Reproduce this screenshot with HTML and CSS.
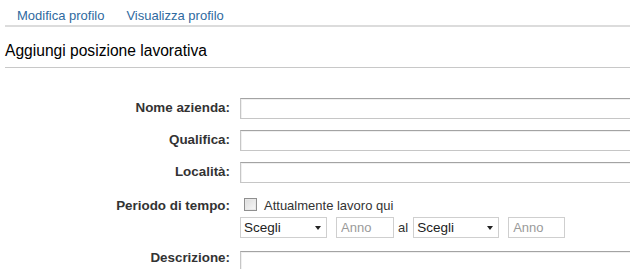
FILE: index.html
```html
<!DOCTYPE html>
<html lang="it">
<head>
<meta charset="utf-8">
<title>Aggiungi posizione lavorativa</title>
<link rel="stylesheet" href="styles.css">
</head>
<body>
<nav class="tabs">
  <a class="tab" href="#">Modifica profilo</a>
  <a class="tab" href="#">Visualizza profilo</a>
</nav>
<h1 class="title">Aggiungi posizione lavorativa</h1>
<form class="form">
  <label class="lbl" for="az">Nome azienda:</label>
  <input class="txt" id="az" type="text">
  <label class="lbl" for="qu">Qualifica:</label>
  <input class="txt" id="qu" type="text">
  <label class="lbl" for="lo">Località:</label>
  <input class="txt" id="lo" type="text">
  <span class="lbl lbl-period">Periodo di tempo:</span>
  <div class="period">
    <label class="cur"><input class="chk" type="checkbox"> Attualmente lavoro qui</label>
    <div class="dates">
      <span class="sel sel-a"><select><option>Scegli</option></select><i class="arr"></i></span>
      <input class="year" type="text" placeholder="Anno">
      <span class="al">al</span>
      <span class="sel sel-b"><select><option>Scegli</option></select><i class="arr"></i></span>
      <input class="year year-b" type="text" placeholder="Anno">
    </div>
  </div>
  <label class="lbl lbl-area" for="de">Descrizione:</label>
  <textarea class="txt area" id="de"></textarea>
</form>
</body>
</html>
```
FILE: styles.css
```css
html, body {
  margin: 0;
  padding: 0;
  background: #fff;
}
body {
  padding-left: 5px;
  font-family: "Liberation Sans", Arial, sans-serif;
  font-size: 13px;
  color: #333;
  overflow: hidden;
}
.tabs {
  display: flex;
  gap: 22px;
  padding: 8px 0 1px 12px;
  line-height: 16px;
  border-bottom: 2px solid #dcdcdc;
}
.tab {
  color: #2f6aa0;
  text-decoration: none;
  font-size: 13px;
}
.title {
  margin: 15px 0 0;
  padding-bottom: 7px;
  font-size: 15.6px;
  font-weight: normal;
  line-height: 18px;
  color: #000;
  border-bottom: 1px solid #c8c8c8;
}
.form {
  display: grid;
  grid-template-columns: 225px 420px;
  column-gap: 10px;
  row-gap: 11px;
  margin-top: 30px;
}
.lbl {
  text-align: right;
  font-weight: bold;
  font-size: 13.4px;
  line-height: 20px;
  color: #333;
}
.lbl-period {
  padding-top: 2px;
}
.lbl-area {
  line-height: 13px;
}
.txt {
  box-sizing: border-box;
  width: 420px;
  height: 21px;
  margin: 0;
  border: 1px solid #c6c6c6;
  border-top-color: #a3a3a3;
  box-shadow: inset 1px 1px 0 #f0f0f0;
  font: 13px "Liberation Sans", Arial, sans-serif;
}
.area {
  height: 60px;
  resize: none;
}
.period {
  padding-top: 2px;
  margin-bottom: 2px;
}
.cur {
  display: flex;
  align-items: flex-start;
  height: 21px;
  line-height: 20px;
  font-size: 13px;
  color: #333;
}
.chk {
  appearance: none;
  -webkit-appearance: none;
  box-sizing: border-box;
  width: 13px;
  height: 13px;
  margin: 2px 7px 0 4px;
  border: 1px solid #8f8f8f;
  background: linear-gradient(135deg, #dcdcdc, #f8f8f8);
  box-shadow: inset 0 0 0 1px #e8e8e8;
}
.dates {
  display: flex;
  align-items: center;
  height: 21px;
}
.sel {
  position: relative;
  display: block;
  box-sizing: border-box;
  width: 87px;
  height: 21px;
}
.sel-b {
  width: 86px;
}
.sel select {
  appearance: none;
  -webkit-appearance: none;
  box-sizing: border-box;
  width: 100%;
  height: 21px;
  margin: 0;
  padding: 0 0 0 3px;
  border: 1px solid #cfcfcf;
  border-radius: 0;
  background: #fff;
  font: 13.5px "Liberation Sans", Arial, sans-serif;
  color: #222;
}
.arr {
  position: absolute;
  right: 6px;
  top: 9px;
  width: 0;
  height: 0;
  border-left: 3.5px solid transparent;
  border-right: 3.5px solid transparent;
  border-top: 4px solid #222;
  pointer-events: none;
}
.year {
  box-sizing: border-box;
  width: 58px;
  height: 21px;
  margin: 0 0 0 9px;
  padding: 0 4px;
  border: 1px solid #cfcfcf;
  font: 13px "Liberation Sans", Arial, sans-serif;
}
.year::placeholder {
  color: #9a9a9a;
}
.year-b {
  width: 57px;
}
.al {
  margin: 0 5px 0 4px;
  font-size: 13px;
  color: #333;
}
```
